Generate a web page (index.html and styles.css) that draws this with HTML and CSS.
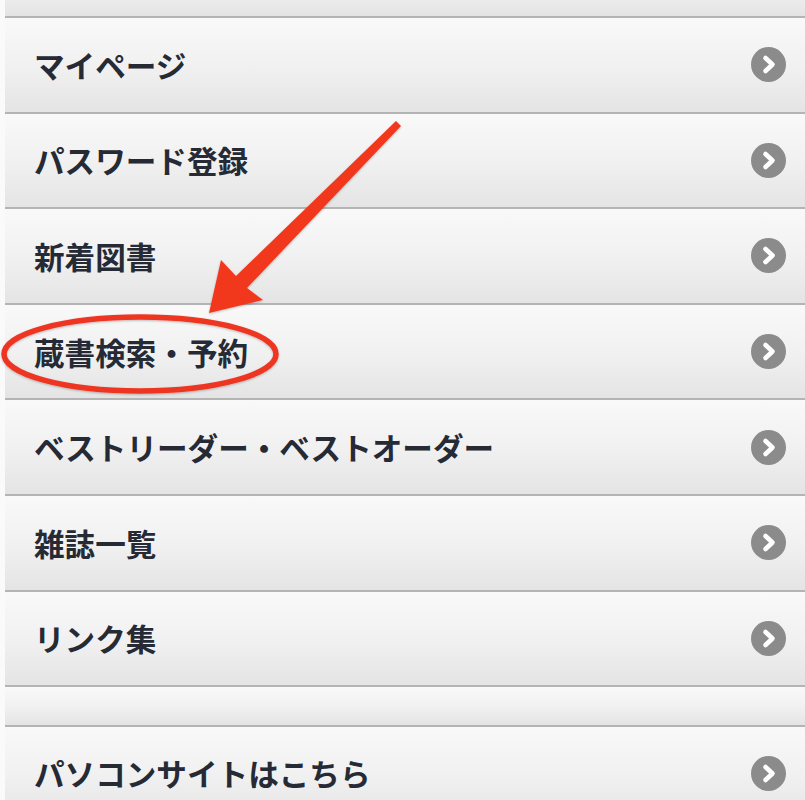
FILE: index.html
```html
<!DOCTYPE html>
<html lang="ja">
<head>
<meta charset="utf-8">
<title>メニュー</title>
<link rel="stylesheet" href="styles.css">
</head>
<body>
<div class="page">
  <ul class="menu">
    <li class="stub"></li>
    <li class="item"><span class="label">マイページ</span><span class="chev"><svg viewBox="0 0 35 35" width="35" height="35"><circle cx="17.5" cy="17.5" r="17.5" fill="#8b8b8b"/><path d="M14.5 11 L21.5 17.5 L14.5 24" fill="none" stroke="#fff" stroke-width="4.6" stroke-linecap="round" stroke-linejoin="round"/></svg></span></li>
    <li class="item"><span class="label">パスワード登録</span><span class="chev"><svg viewBox="0 0 35 35" width="35" height="35"><circle cx="17.5" cy="17.5" r="17.5" fill="#8b8b8b"/><path d="M14.5 11 L21.5 17.5 L14.5 24" fill="none" stroke="#fff" stroke-width="4.6" stroke-linecap="round" stroke-linejoin="round"/></svg></span></li>
    <li class="item"><span class="label">新着図書</span><span class="chev"><svg viewBox="0 0 35 35" width="35" height="35"><circle cx="17.5" cy="17.5" r="17.5" fill="#8b8b8b"/><path d="M14.5 11 L21.5 17.5 L14.5 24" fill="none" stroke="#fff" stroke-width="4.6" stroke-linecap="round" stroke-linejoin="round"/></svg></span></li>
    <li class="item"><span class="label">蔵書検索・予約</span><span class="chev"><svg viewBox="0 0 35 35" width="35" height="35"><circle cx="17.5" cy="17.5" r="17.5" fill="#8b8b8b"/><path d="M14.5 11 L21.5 17.5 L14.5 24" fill="none" stroke="#fff" stroke-width="4.6" stroke-linecap="round" stroke-linejoin="round"/></svg></span></li>
    <li class="item"><span class="label">ベストリーダー・ベストオーダー</span><span class="chev"><svg viewBox="0 0 35 35" width="35" height="35"><circle cx="17.5" cy="17.5" r="17.5" fill="#8b8b8b"/><path d="M14.5 11 L21.5 17.5 L14.5 24" fill="none" stroke="#fff" stroke-width="4.6" stroke-linecap="round" stroke-linejoin="round"/></svg></span></li>
    <li class="item"><span class="label">雑誌一覧</span><span class="chev"><svg viewBox="0 0 35 35" width="35" height="35"><circle cx="17.5" cy="17.5" r="17.5" fill="#8b8b8b"/><path d="M14.5 11 L21.5 17.5 L14.5 24" fill="none" stroke="#fff" stroke-width="4.6" stroke-linecap="round" stroke-linejoin="round"/></svg></span></li>
    <li class="item"><span class="label">リンク集</span><span class="chev"><svg viewBox="0 0 35 35" width="35" height="35"><circle cx="17.5" cy="17.5" r="17.5" fill="#8b8b8b"/><path d="M14.5 11 L21.5 17.5 L14.5 24" fill="none" stroke="#fff" stroke-width="4.6" stroke-linecap="round" stroke-linejoin="round"/></svg></span></li>
    <li class="spacer"></li>
    <li class="item last"><span class="label">パソコンサイトはこちら</span><span class="chev"><svg viewBox="0 0 35 35" width="35" height="35"><circle cx="17.5" cy="17.5" r="17.5" fill="#8b8b8b"/><path d="M14.5 11 L21.5 17.5 L14.5 24" fill="none" stroke="#fff" stroke-width="4.6" stroke-linecap="round" stroke-linejoin="round"/></svg></span></li>
  </ul>
  <svg class="markup" viewBox="0 0 805 800" width="805" height="800">
    <defs>
      <filter id="sh" x="-20%" y="-20%" width="140%" height="140%">
        <feDropShadow dx="0" dy="1" stdDeviation="1.2" flood-color="#000" flood-opacity="0.25"/>
      </filter>
    </defs>
    <polygon filter="url(#sh)" fill="#f2381e" points="209,313 221,260 236,276 396,121 401,126 247,288 263,300"/>
    <ellipse filter="url(#sh)" cx="140" cy="354" rx="136" ry="37" fill="none" stroke="#ee3620" stroke-width="5.5"/>
  </svg>
</div>
</body>
</html>
```

FILE: styles.css
```css
html, body {
  margin: 0;
  padding: 0;
}
body {
  background: #fafafa;
  font-family: "Noto Sans CJK JP", "Noto Sans", sans-serif;
  overflow: hidden;
}
.page {
  position: relative;
  width: 805px;
  height: 800px;
  overflow: hidden;
  padding-left: 5px;
  box-sizing: border-box;
}
.menu {
  list-style: none;
  margin: 0;
  padding: 0;
}
.menu li {
  box-sizing: border-box;
  border-bottom: 2px solid #b4b4b4;
  background: linear-gradient(to bottom, #f9f9f9 0%, #f0f0f0 55%, #e4e4e4 100%);
}
.stub {
  height: 18px;
  background: linear-gradient(to bottom, #ececec, #e3e3e3) !important;
}
.item {
  height: 95.6px;
  display: flex;
  align-items: center;
  justify-content: space-between;
  padding: 0 19px 0 29px;
}
.spacer {
  height: 39.5px;
}
.label {
  font-size: 30.6px;
  font-weight: 600;
  color: #262a35;
  letter-spacing: 0;
}
.chev {
  display: flex;
  width: 35px;
  height: 35px;
}
.markup {
  position: absolute;
  top: 0;
  left: 0;
  pointer-events: none;
}
```
